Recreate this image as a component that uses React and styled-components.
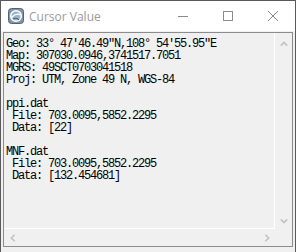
import React from 'react';
import styled, { createGlobalStyle } from 'styled-components';

const GlobalStyle = createGlobalStyle`
  html, body {
    margin: 0;
    padding: 0;
    background: #f0f0f0;
  }
`;

//Window
const Window = styled.div`
  box-sizing: border-box;
  width: 296px;
  height: 252px;
  display: flex;
  flex-direction: column;
  border: 1px solid #5a5a5a;
  border-bottom: none;
  background: #f0f0f0;
  overflow: hidden;
`;

//TitleBar
const TitleBar = styled.div`
  height: 30px;
  flex: none;
  display: flex;
  align-items: center;
  background: #ffffff;
  padding-left: 7px;
`;

const Title = styled.span`
  margin-left: 5px;
  font-family: "Open Sans", "Noto Sans", sans-serif;
  font-size: 12px;
  color: #9a9a9a;
  flex: 1;
`;

const CaptionButton = styled.div`
  width: 45px;
  height: 30px;
  display: flex;
  align-items: center;
  justify-content: center;
`;

//Body
const Body = styled.div`
  flex: 1;
  padding: 1px 2px 0 2px;
`;

//EditBox
const EditBox = styled.div`
  box-sizing: border-box;
  height: 215px;
  border: 1px solid #8c8c8c;
  display: grid;
  grid-template-columns: 1fr 17px;
  grid-template-rows: 1fr 17px;
`;

const TextArea = styled.div`
  border-right: 1px solid #ffffff;
  border-bottom: 1px solid #ffffff;
  padding: 5px 0 0 2px;
  overflow: hidden;
  white-space: pre;
  font-family: "Liberation Mono", "DejaVu Sans Mono", monospace;
  font-size: 12px;
  letter-spacing: -1.2px;
  line-height: 12px;
  color: #000000;
`;

const ScrollBar = styled.div`
  display: flex;
  flex-direction: ${p => (p.$vertical ? 'column' : 'row')};
  justify-content: space-between;
  padding-top: ${p => (p.$vertical ? '2px' : '0')};
`;

const ArrowButton = styled.div`
  width: 17px;
  height: 17px;
  display: flex;
  align-items: center;
  justify-content: center;
`;

const Corner = styled.div``;

const chevrons = {
  up: '0.8,4.6 4,1.4 7.2,4.6',
  down: '0.8,1.4 4,4.6 7.2,1.4',
};

function Chevron({ dir }) {
  if (dir === 'up' || dir === 'down') {
    return (
      <svg width="8" height="6" viewBox="0 0 8 6">
        <polyline points={chevrons[dir]} fill="none" stroke="#c2c2c2" strokeWidth="1.6" />
      </svg>
    );
  }
  const pts = dir === 'left' ? '4.6,0.8 1.4,4 4.6,7.2' : '1.4,0.8 4.6,4 1.4,7.2';
  return (
    <svg width="6" height="8" viewBox="0 0 6 8">
      <polyline points={pts} fill="none" stroke="#c2c2c2" strokeWidth="1.6" />
    </svg>
  );
}

function AppIcon() {
  return (
    <svg width="16" height="16" viewBox="0 0 16 16">
      <rect x="0.5" y="0.5" width="15" height="15" rx="3" fill="#7e97ad" stroke="#4e6377" />
      <circle cx="8" cy="8" r="5.3" fill="#9fb3c4" stroke="#ffffff" strokeWidth="1.5" />
      <path d="M3.5 9.5 Q8 4.5 12.5 7" fill="none" stroke="#ffffff" strokeWidth="1.3" />
      <path d="M5 11 Q9 9 11 12" fill="none" stroke="#4e6377" strokeWidth="1.1" />
    </svg>
  );
}

const lines = [
  'Geo: 33° 47′46.49″N,108° 54′55.95″E',
  'Map: 307030.0946,3741517.7051',
  'MGRS: 49SCT0703041518',
  'Proj: UTM, Zone 49 N, WGS-84',
  '',
  'ppi.dat',
  ' File: 703.0095,5852.2295',
  ' Data: [22]',
  '',
  'MNF.dat',
  ' File: 703.0095,5852.2295',
  ' Data: [132.454681]',
];

export default function App() {
  return (
    <>
      <GlobalStyle />
      <Window>
        <TitleBar>
          <AppIcon />
          <Title>Cursor Value</Title>
          <CaptionButton>
            <svg width="10" height="10" viewBox="0 0 10 10">
              <line x1="0" y1="5.5" x2="10" y2="5.5" stroke="#8a8a8a" strokeWidth="1" />
            </svg>
          </CaptionButton>
          <CaptionButton>
            <svg width="10" height="10" viewBox="0 0 10 10">
              <rect x="0.5" y="0.5" width="9" height="9" fill="none" stroke="#8a8a8a" strokeWidth="1" />
            </svg>
          </CaptionButton>
          <CaptionButton>
            <svg width="10" height="10" viewBox="0 0 10 10">
              <path d="M0 0 L10 10 M10 0 L0 10" stroke="#8a8a8a" strokeWidth="1" />
            </svg>
          </CaptionButton>
        </TitleBar>
        <Body>
          <EditBox>
            <TextArea>{lines.join('\n')}</TextArea>
            <ScrollBar $vertical>
              <ArrowButton><Chevron dir="up" /></ArrowButton>
              <ArrowButton><Chevron dir="down" /></ArrowButton>
            </ScrollBar>
            <ScrollBar>
              <ArrowButton><Chevron dir="left" /></ArrowButton>
              <ArrowButton><Chevron dir="right" /></ArrowButton>
            </ScrollBar>
            <Corner />
          </EditBox>
        </Body>
      </Window>
    </>
  );
}
